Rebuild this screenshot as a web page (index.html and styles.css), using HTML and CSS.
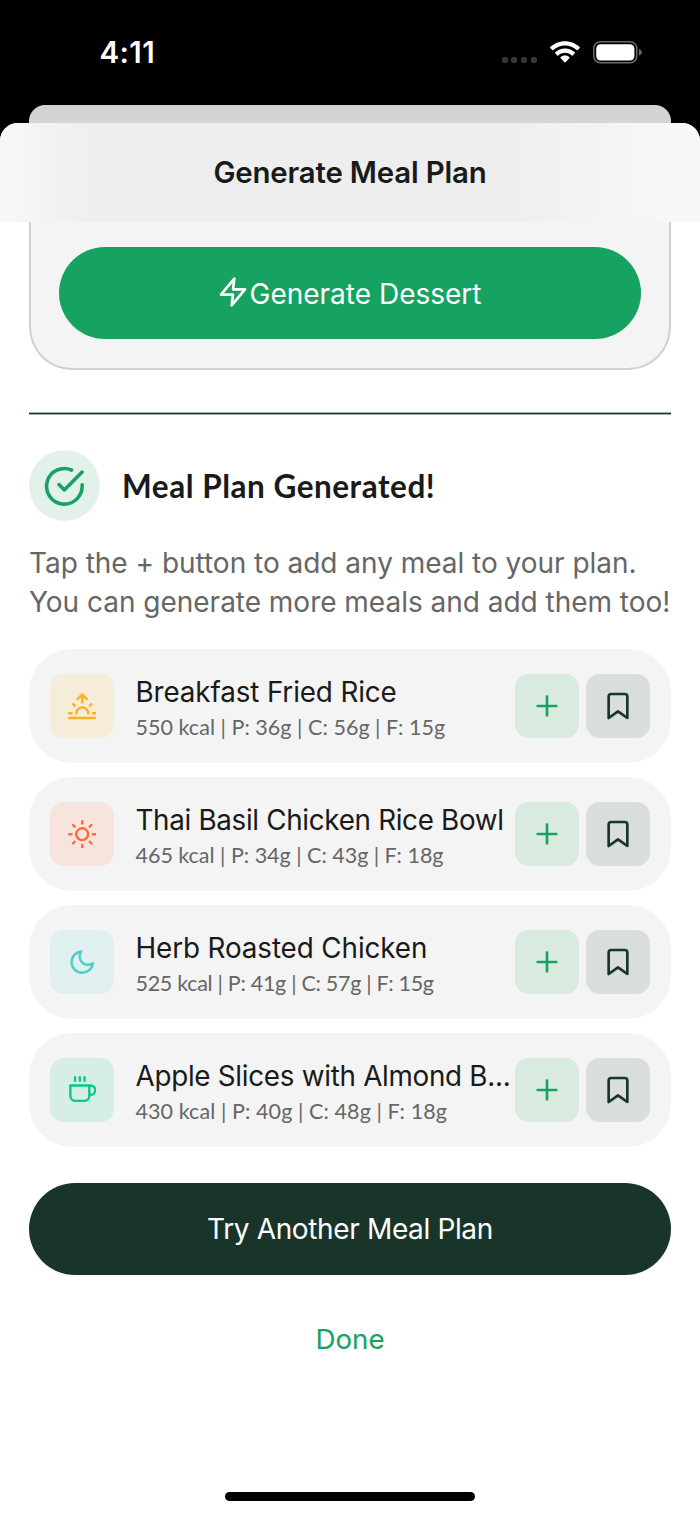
FILE: index.html
```html
<!DOCTYPE html>
<html lang="en">
<head>
<meta charset="utf-8">
<title>Generate Meal Plan</title>
<link rel="stylesheet" href="styles.css">
</head>
<body>
<svg class="sprite" aria-hidden="true">
  <symbol id="plus" viewBox="0 0 24 24"><path d="M12 5v14M5 12h14"/></symbol>
  <symbol id="bookmark" viewBox="0 0 24 24"><path d="M19 21l-7-5-7 5V5a2 2 0 0 1 2-2h10a2 2 0 0 1 2 2z"/></symbol>
</svg>
<div class="phone">
  <div class="status">
    <span class="time">4:11</span>
    <div class="signals">
      <div class="dots"><i></i><i></i><i></i><i></i></div>
      <svg class="wifi" viewBox="0 0 30 22">
        <path d="M15 0.2C20.8 0.2 26 2.5 29.7 6.1c.3.3.3.7 0 1L27.7 9.1c-.3.3-.7.3-1 0C23.600 6.200 19.500 4.500 15 4.500S6.400 6.200 3.300 9.100c-.3.3-.7.3-1 0L.3 7.100c-.3-.3-.3-.7 0-1C4 2.500 9.200.2 15 .2z"/>
        <path d="M15 7.400c3.800 0 7.300 1.500 9.800 3.900.3.3.3.7 0 1l-2.100 2.100c-.3.3-.7.3-1 0C19.900 12.700 17.600 11.700 15 11.700s-4.900 1-6.700 2.700c-.3.3-.7.3-1 0L5.200 12.300c-.3-.3-.3-.7 0-1C7.700 8.900 11.200 7.400 15 7.400z"/>
        <path d="M15 14.500c1.800 0 3.400.7 4.500 1.700.3.3.3.6 0 .9l-4 4.200c-.3.3-.7.3-1 0l-4-4.200c-.3-.3-.3-.6 0-.9 1.100-1 2.700-1.700 4.500-1.700z"/>
      </svg>
      <svg class="battery" viewBox="0 0 50 23">
        <rect x=".8" y=".8" width="43" height="21" rx="6.500" fill="none" stroke="#6a6a6a" stroke-width="1.500"/>
        <rect x="3.200" y="3.200" width="38.200" height="16.200" rx="4.300" fill="#fff"/>
        <path d="M46 8c1.700.6 2.700 1.900 2.700 3.300s-1 2.700-2.700 3.300z" fill="#6a6a6a"/>
      </svg>
    </div>
  </div>
  <div class="back-sheet"></div>
  <div class="sheet">
    <header class="bar"><h1>Generate Meal Plan</h1></header>
    <main class="content">
      <section class="panel">
        <button class="btn btn-green">
          <svg class="icon zap" viewBox="0 0 24 24"><path d="M13 2 3 14h9l-1 8 10-12h-9l1-8z"/></svg><span>Generate Dessert</span>
        </button>
      </section>
      <hr class="divider">
      <div class="result">
        <span class="badge"><svg class="icon" viewBox="0 0 24 24"><path d="M22 11.080V12a10 10 0 1 1-5.930-9.140M22 4 12 14.010l-3-3"/></svg></span>
        <h2>Meal Plan Generated!</h2>
      </div>
      <p class="hint">Tap the + button to add any meal to your plan.<br>You can generate more meals and add them too!</p>
      <ul class="meals">
        <li class="meal">
          <span class="tile breakfast"><svg class="icon small" viewBox="0 0 24 24"><path d="M17 18a5 5 0 0 0-10 0M12 2v7M4.220 10.220l1.420 1.420M1 18h2M21 18h2M18.360 11.640l1.420-1.420M23 22H1M8 6l4-4 4 4"/></svg></span>
          <div class="info"><div class="name n1">Breakfast Fried Rice</div><div class="macros">550 kcal | P: 36g | C: 56g | F: 15g</div></div>
          <button class="tile add"><svg class="icon"><use href="#plus"/></svg></button>
          <button class="tile save"><svg class="icon"><use href="#bookmark"/></svg></button>
        </li>
        <li class="meal">
          <span class="tile lunch"><svg class="icon small" viewBox="0 0 24 24"><circle cx="12" cy="12" r="5"/><path d="M12 1v2M12 21v2M4.220 4.220l1.420 1.420M18.360 18.360l1.420 1.420M1 12h2M21 12h2M4.220 19.780l1.420-1.420M18.360 5.640l1.420-1.420"/></svg></span>
          <div class="info"><div class="name n2">Thai Basil Chicken Rice Bowl</div><div class="macros m2">465 kcal | P: 34g | C: 43g | F: 18g</div></div>
          <button class="tile add"><svg class="icon"><use href="#plus"/></svg></button>
          <button class="tile save"><svg class="icon"><use href="#bookmark"/></svg></button>
        </li>
        <li class="meal">
          <span class="tile dinner"><svg class="icon small" viewBox="0 0 24 24"><path d="M21 12.790A9 9 0 1 1 11.210 3 7 7 0 0 0 21 12.790z"/></svg></span>
          <div class="info"><div class="name n3">Herb Roasted Chicken</div><div class="macros m3">525 kcal | P: 41g | C: 57g | F: 15g</div></div>
          <button class="tile add"><svg class="icon"><use href="#plus"/></svg></button>
          <button class="tile save"><svg class="icon"><use href="#bookmark"/></svg></button>
        </li>
        <li class="meal">
          <span class="tile snack"><svg class="icon small" viewBox="0 0 24 24"><path d="M18 8h1a4 4 0 0 1 0 8h-1M2 8h16v9a4 4 0 0 1-4 4H6a4 4 0 0 1-4-4V8zM6 1v3M10 1v3M14 1v3"/></svg></span>
          <div class="info"><div class="name n4">Apple Slices with Almond B...</div><div class="macros m4">430 kcal | P: 40g | C: 48g | F: 18g</div></div>
          <button class="tile add"><svg class="icon"><use href="#plus"/></svg></button>
          <button class="tile save"><svg class="icon"><use href="#bookmark"/></svg></button>
        </li>
      </ul>
      <button class="btn btn-dark">Try Another Meal Plan</button>
      <button class="done">Done</button>
    </main>
    <div class="home"></div>
  </div>
</div>
</body>
</html>
```
FILE: styles.css
```css
* { box-sizing: border-box; }
body { margin: 0; background: #000; font-family: Inter, "Liberation Sans", sans-serif; color: #1a1a1a; }
h1, h2, p, ul { margin: 0; padding: 0; }
button { border: 0; padding: 0; font: inherit; }
.sprite { display: none; }

.phone { width: 700px; height: 1515px; overflow: hidden; display: flex; flex-direction: column; background: #000; }

.status { height: 105px; flex: none; display: flex; justify-content: space-between; padding: 34px 57.5px 0 99.5px; color: #fff; }
.time { font-size: 29.5px; line-height: 36px; font-weight: 600; letter-spacing: .4px; }
.signals { display: flex; align-items: flex-start; padding-top: 6.5px; }
.dots { display: flex; gap: 3.600px; padding-top: 16.500px; margin-right: 13px; }
.dots i { width: 6px; height: 6px; border-radius: 2px; background: #363636; }
.wifi { width: 30px; height: 22px; fill: #fff; margin-right: 13px; }
.battery { width: 50px; height: 23px; }

.back-sheet { height: 18px; flex: none; margin: 0 29px; border-radius: 16px 16px 0 0; background: linear-gradient(#d1d1d1, #d6d6d6); }
.sheet { flex: 1; display: flex; flex-direction: column; background: #fff; border-radius: 18px 18px 0 0; overflow: hidden; }
.bar { height: 99px; flex: none; display: flex; justify-content: center; background: linear-gradient(90deg, #f8f8f8 0, #f1f1f1 62px, #eee 110px, #eee 490px, #f3f3f3 590px, #f8f8f8 690px); }
h1 { font-size: 29.400px; line-height: 36px; font-weight: 600; padding-top: 32px; letter-spacing: -.18px; }

.content { flex: 1; padding: 0 29px; display: flex; flex-direction: column; }
.panel { height: 148px; flex: none; padding: 25px 28px 0; background: #f4f4f4; border: 2px solid #d0d0d0; border-top: 0; border-radius: 0 0 43px 43px; }
.btn { width: 100%; height: 92px; flex: none; border-radius: 46px; display: flex; align-items: center; justify-content: center; color: #fff; font-size: 28px; }
.btn-green { background: #16a260; padding-top: 1px; }
.icon { width: 32px; height: 32px; flex: none; fill: none; stroke: currentColor; stroke-width: 2; stroke-linecap: round; stroke-linejoin: round; }
.icon.small { width: 28.400px; height: 28.400px; }
.zap { margin: 0 .5px 4px -1.5px; }
.divider { width: 100%; height: 3px; flex: none; margin: 42px 0 35px; border: solid #a3b0aa; border-width: 1px 0; background: #19352a; }

.result { display: flex; align-items: center; gap: 22px; }
.badge { width: 71px; height: 71px; border-radius: 50%; display: flex; align-items: center; justify-content: center; background: #e2f2ea; color: #16a260; }
.badge .icon { width: 42.700px; height: 42.700px; margin-top: 1px; }
h2 { font: 700 31.500px/40px Lato, sans-serif; letter-spacing: .52px; padding-top: 1px; }
.hint { margin-top: 23px; font-size: 28px; line-height: 39px; color: #666; letter-spacing: -.02px; white-space: nowrap; }

.meals { list-style: none; margin-top: 27px; display: flex; flex-direction: column; gap: 14px; }
.meal { height: 114px; border-radius: 43px; background: #f4f4f4; padding: 0 21px; display: flex; align-items: center; }
.tile { width: 64px; height: 64px; flex: none; border-radius: 14px; display: flex; align-items: center; justify-content: center; }
.info { flex: 1; min-width: 0; margin-left: 21.500px; padding-top: 1px; white-space: nowrap; }
.name { font-size: 27.800px; line-height: 38px; }
.n1 { letter-spacing: -.12px; }
.n2 { letter-spacing: -.32px; }
.n3 { letter-spacing: -.1px; }
.n4 { letter-spacing: -.28px; }
.macros { margin-top: 3px; font: 21.500px/27px Lato, sans-serif; color: #666; letter-spacing: .03px; }
.m2 { letter-spacing: -.02px; }
.m3 { letter-spacing: -.3px; }
.m4 { letter-spacing: .08px; }
.breakfast { background: #f5ecd9; color: #ffb020; }
.lunch { background: #f6e4dd; color: #ff6b35; }
.dinner { background: #e0efef; color: #4ecdc4; }
.snack { background: #d6eee5; color: #06c983; }
.add { background: #d9eae0; color: #16a260; }
.save { background: #d9dddb; color: #19352a; margin-left: 7px; }

.btn-dark { margin-top: 36px; background: #19352a; letter-spacing: -.36px; }
.done { align-self: center; margin-top: 45px; background: none; color: #16a260; font-size: 27.700px; line-height: 38px; }
.home { width: 250px; height: 9px; flex: none; margin: 0 auto 14px; border-radius: 5px; background: #000; }
```
